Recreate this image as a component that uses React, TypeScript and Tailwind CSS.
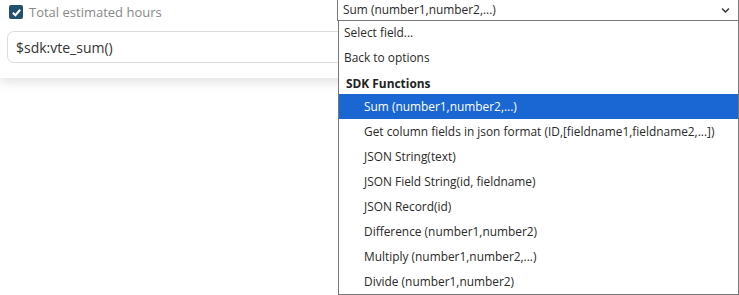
import { FaChevronDown } from "react-icons/fa";

const sdkOptions = [
  "Sum (number1,number2,...)",
  "Get column fields in json format (ID,[fieldname1,fieldname2,...])",
  "JSON String(text)",
  "JSON Field String(id, fieldname)",
  "JSON Record(id)",
  "Difference (number1,number2)",
  "Multiply (number1,number2,...)",
  "Divide (number1,number2)",
];

export default function App() {
  return (
    <div className="relative h-[295px] w-[739px] overflow-hidden bg-white font-['Open_Sans',sans-serif]">
      {/* Field card */}
      <div className="h-[78px] bg-white px-[7px] pt-[2px] shadow-[0_4px_10px_rgba(0,0,0,0.12)]">
        <label className="flex items-center gap-[6px] pl-[2px]">
          <span className="flex h-[14px] w-[14px] items-center justify-center rounded-[2px] bg-[#24506f]">
            <svg viewBox="0 0 12 12" className="h-[11px] w-[11px]">
              <path d="M2 6.2 L4.8 9 L10 3" fill="none" stroke="white" strokeWidth="2.2" />
            </svg>
          </span>
          <span className="text-[13px] leading-[20px] text-[#888]">Total estimated hours</span>
        </label>
        <div className="mt-[9px] flex h-[32px] w-[760px] items-center rounded-[7px] border border-[#dcdcdc] px-[8px] text-[14px] text-[#333]">
          $sdk:vte_sum()
        </div>
      </div>

      {/* Open select */}
      <div className="absolute left-[337px] top-0 w-[402px] text-[11.9px] text-[#2a2a2a]">
        <div className="-mt-px flex h-[22px] items-center justify-between border border-[#777] bg-white pl-[5px] pr-[8px]">
          <span>Sum (number1,number2,...)</span>
          <FaChevronDown className="h-[9px] w-[9px] text-[#333]" />
        </div>
        <ul className="ml-px border-x border-b border-[#777] bg-white">
          <li className="flex h-[24px] items-center pl-[5px]">Select field...</li>
          <li className="flex h-[25px] items-center pl-[5px]">Back to options</li>
          <li className="flex h-[24px] items-center pl-[7px] pt-[3px] font-bold text-[#222]">SDK Functions</li>
          {sdkOptions.map((o, i) => (
            <li
              key={o}
              className={
                i === 0
                  ? "flex h-[25px] items-center bg-[#1a66d2] pl-[25px] text-white"
                  : "flex h-[25px] items-center pl-[25px]"
              }
            >
              {o}
            </li>
          ))}
        </ul>
      </div>
    </div>
  );
}
